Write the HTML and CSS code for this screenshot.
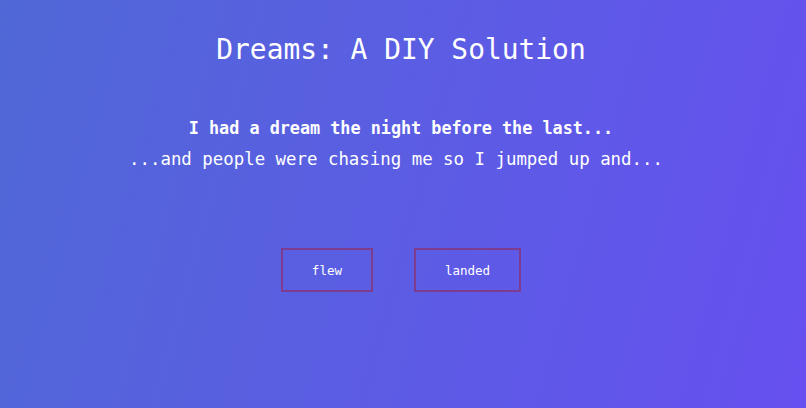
FILE: index.html
```html
<!DOCTYPE html>
<html lang="en">
<head>
  <meta charset="UTF-8" />
  <title>Dreams: A DIY Solution</title>
  <link rel="stylesheet" href="styles.css">
</head>
<body>
  <div class="page">
    <h1>Dreams: A DIY Solution</h1>

    <div class="story">
      <p class="intro">I had a dream the night before the last...</p>
      <p class="line">...and people were chasing me so I jumped up and...</p>
    </div>

    <div class="choices">
      <button class="choice">flew</button>
      <button class="choice">landed</button>
    </div>
  </div>
</body>
</html>
```

FILE: styles.css
```css
html, body {
  margin: 0;
  padding: 0;
  height: 100%;
}

body {
  font-family: "DejaVu Sans Mono", "Liberation Mono", monospace;
  color: #ffffff;
  background: linear-gradient(105deg, #5068d6 0%, #5a5ee2 45%, #6650f0 100%);
  overflow: hidden;
}

.page {
  display: flex;
  flex-direction: column;
  align-items: center;
  padding-top: 33px;
  padding-right: 4px;
}

h1 {
  margin: 0;
  font-size: 27.9px;
  font-weight: normal;
  line-height: 34px;
}

.story {
  margin-top: 50px;
  text-align: center;
}

.story p {
  margin: 0;
}

.intro {
  font-size: 16.8px;
  font-weight: bold;
  line-height: 22px;
}

.line {
  margin-top: 9px !important;
  font-size: 17.4px;
  line-height: 22px;
  padding-right: 10px;
}

.choices {
  display: flex;
  gap: 41px;
  margin-top: 78px;
}

.choice {
  font-family: inherit;
  font-size: 12.5px;
  color: #ffffff;
  background: transparent;
  border: 2px solid #7e3c8e;
  height: 44px;
  padding: 0 29px;
  cursor: pointer;
}

.choice:hover {
  background: rgba(255, 255, 255, 0.08);
}
```
